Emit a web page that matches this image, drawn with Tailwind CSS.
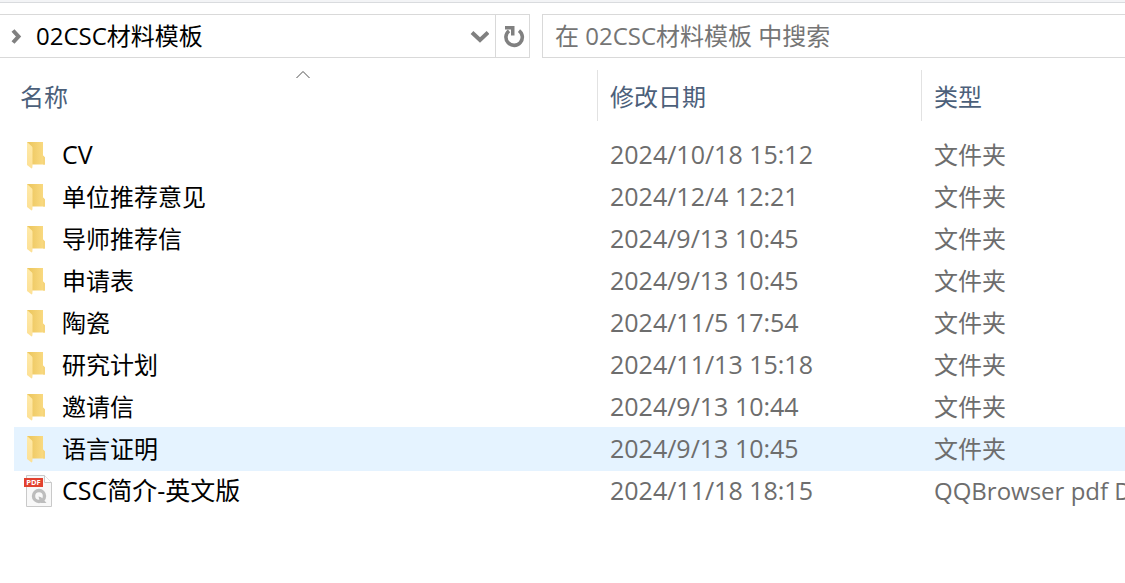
<!DOCTYPE html>
<html lang="zh-CN">
<head>
  <meta charset="UTF-8">
  <title>02CSC材料模板</title>
  <script src="https://cdn.jsdelivr.net/npm/@tailwindcss/browser@4"></script>
</head>
<body class="bg-white text-2xl text-black overflow-hidden font-['Open_Sans','Noto_Sans_CJK_SC',sans-serif]">
  <svg class="w-0 h-0">
    <defs>
      <linearGradient id="folderBack" x1="0" y1="0" x2="1" y2="0">
        <stop offset="0.2" stop-color="#eec963"/>
        <stop offset="1" stop-color="#fbdc85"/>
      </linearGradient>
      <linearGradient id="folderFront" x1="0" y1="0" x2="0" y2="1">
        <stop offset="0" stop-color="#ffeaa9"/>
        <stop offset="1" stop-color="#fde094"/>
      </linearGradient>
      <symbol id="folder" viewBox="0 0 28 32">
        <path d="M3 3h16v13.500l2 2V25.500H5z" fill="url(#folderBack)"/>
        <path d="M19 16.500l2 2V25.500h-2z" fill="#f5d47b"/>
        <path d="M3 3l5 4.500q.5.500.5 1.500v18q0 2.500-1 2.500L3 26z" fill="url(#folderFront)"/>
      </symbol>
    </defs>
  </svg>

  <!-- Toolbar edge -->
  <div class="h-[3px] bg-[#f3f4f6] border-b border-[#d9dbde]"></div>

  <!-- Address bar + search -->
  <header class="mt-[11px] flex gap-3 h-11">
    <nav class="w-[530px] shrink-0 flex items-center border border-l-0 border-[#d9d9d9]">
      <svg class="ml-[10px] mr-3 w-[14px] h-4 shrink-0" viewBox="0 0 14 16" fill="none" stroke="#808080" stroke-width="4"><path d="M3 2.500L8.500 8.500 3 14.500"/></svg>
      <a href="#" class="flex-1 truncate">02CSC材料模板</a>
      <button class="w-8 h-full flex items-center justify-center" aria-label="以前的位置">
        <svg class="w-5 h-4" viewBox="0 0 20 16" fill="none" stroke="#808080" stroke-width="4"><path d="M3 4.500L11 12 19 4.500"/></svg>
      </button>
      <button class="w-[34px] h-full flex items-center justify-center border-l border-[#d9d9d9]" aria-label="刷新">
        <svg class="w-6 h-6" viewBox="0 0 24 24"><path d="M8 6.800A8.200 8.200 0 1 0 18 6.600" fill="none" stroke="#808080" stroke-width="3.600"/><path d="M4 2H13.500V11.500H10V5.500H4z" fill="#808080"/></svg>
      </button>
    </nav>
    <input type="search" aria-label="搜索" placeholder="在 02CSC材料模板 中搜索" class="flex-1 min-w-0 border border-r-0 border-[#d9d9d9] px-3 placeholder:text-[#757575] outline-none">
  </header>

  <!-- File list -->
  <main class="mt-3 ml-[14px]">
    <table class="w-full table-fixed whitespace-nowrap text-left">
      <colgroup>
        <col class="w-[583px]">
        <col class="w-[324px]">
        <col>
      </colgroup>
      <thead class="text-[#4c607a]">
        <tr class="h-16 align-top">
          <th class="p-0 font-normal">
            <div class="relative mr-[6px] h-[51px] pl-[6px] flex items-center">
              <button class="mt-[2px]">名称</button>
              <svg class="absolute left-1/2 top-0 -translate-x-1/2 w-4 h-[9px]" viewBox="0 0 16 9" fill="none" stroke="#505050"><path d="M1.500 8L8 1.500 14.500 8"/></svg>
            </div>
          </th>
          <th class="p-0 font-normal"><div class="h-[51px] pl-3 flex items-center border-l border-[#e2e2e2]"><button class="mt-[2px]">修改日期</button></div></th>
          <th class="p-0 font-normal"><div class="h-[51px] pl-3 flex items-center border-l border-[#e2e2e2]"><button class="mt-[2px]">类型</button></div></th>
        </tr>
      </thead>
      <tbody class="text-[#6d6d6d]">
        <tr class="h-[42px]">
          <td class="p-0"><a href="#" class="pl-[10px] flex items-center gap-[10px] text-black text-[25px]"><svg class="w-7 h-8"><use href="#folder"/></svg>CV</a></td>
          <td class="p-0 pl-[13px] text-[25px]">2024/10/18 15:12</td>
          <td class="p-0 pl-[13px]">文件夹</td>
        </tr>
        <tr class="h-[42px]">
          <td class="p-0"><a href="#" class="pl-[10px] flex items-center gap-[10px] text-black"><svg class="w-7 h-8"><use href="#folder"/></svg>单位推荐意见</a></td>
          <td class="p-0 pl-[13px] text-[25px]">2024/12/4 12:21</td>
          <td class="p-0 pl-[13px]">文件夹</td>
        </tr>
        <tr class="h-[42px]">
          <td class="p-0"><a href="#" class="pl-[10px] flex items-center gap-[10px] text-black"><svg class="w-7 h-8"><use href="#folder"/></svg>导师推荐信</a></td>
          <td class="p-0 pl-[13px] text-[25px]">2024/9/13 10:45</td>
          <td class="p-0 pl-[13px]">文件夹</td>
        </tr>
        <tr class="h-[42px]">
          <td class="p-0"><a href="#" class="pl-[10px] flex items-center gap-[10px] text-black"><svg class="w-7 h-8"><use href="#folder"/></svg>申请表</a></td>
          <td class="p-0 pl-[13px] text-[25px]">2024/9/13 10:45</td>
          <td class="p-0 pl-[13px]">文件夹</td>
        </tr>
        <tr class="h-[42px]">
          <td class="p-0"><a href="#" class="pl-[10px] flex items-center gap-[10px] text-black"><svg class="w-7 h-8"><use href="#folder"/></svg>陶瓷</a></td>
          <td class="p-0 pl-[13px] text-[25px]">2024/11/5 17:54</td>
          <td class="p-0 pl-[13px]">文件夹</td>
        </tr>
        <tr class="h-[42px]">
          <td class="p-0"><a href="#" class="pl-[10px] flex items-center gap-[10px] text-black"><svg class="w-7 h-8"><use href="#folder"/></svg>研究计划</a></td>
          <td class="p-0 pl-[13px] text-[25px]">2024/11/13 15:18</td>
          <td class="p-0 pl-[13px]">文件夹</td>
        </tr>
        <tr class="h-[42px]">
          <td class="p-0"><a href="#" class="pl-[10px] flex items-center gap-[10px] text-black"><svg class="w-7 h-8"><use href="#folder"/></svg>邀请信</a></td>
          <td class="p-0 pl-[13px] text-[25px]">2024/9/13 10:44</td>
          <td class="p-0 pl-[13px]">文件夹</td>
        </tr>
        <!-- hovered row -->
        <tr class="h-[42px] bg-[#e5f3ff] shadow-[0_1px_#e5f3ff,0_-1px_#e5f3ff]">
          <td class="p-0"><a href="#" class="pl-[10px] flex items-center gap-[10px] text-black"><svg class="w-7 h-8"><use href="#folder"/></svg>语言证明</a></td>
          <td class="p-0 pl-[13px] text-[25px]">2024/9/13 10:45</td>
          <td class="p-0 pl-[13px]">文件夹</td>
        </tr>
        <tr class="h-[42px]">
          <td class="p-0">
            <a href="#" class="pl-[10px] flex items-center gap-[10px] text-black text-[25px]">
              <svg class="w-7 h-8" viewBox="0 0 28 32">
                <path d="M2.500.5H20.500L27.500 7.500V31.500H2.500z" fill="#f8f8f8" stroke="#c9c9c9"/>
                <path d="M20.500.5V7.500H27.500" fill="#fff" stroke="#c9c9c9"/>
                <path d="M0 3H19V12H0z" fill="#e2412e"/>
                <text x="9.500" y="10.200" text-anchor="middle" font-size="7.500" font-weight="700" fill="#fff">PDF</text>
                <circle cx="15" cy="21" r="5.500" fill="none" stroke="#bdbdbd" stroke-width="3.400"/>
                <path d="M14.500 21.500q3 0 4.500 2.500l3.500 4h-5.500q-2-3-2.500-6.500z" fill="#bdbdbd"/>
              </svg>
              CSC简介-英文版
            </a>
          </td>
          <td class="p-0 pl-[13px] text-[25px]">2024/11/18 18:15</td>
          <td class="p-0 pl-[13px] overflow-hidden">QQBrowser pdf Document</td>
        </tr>
      </tbody>
    </table>
  </main>
</body>
</html>
